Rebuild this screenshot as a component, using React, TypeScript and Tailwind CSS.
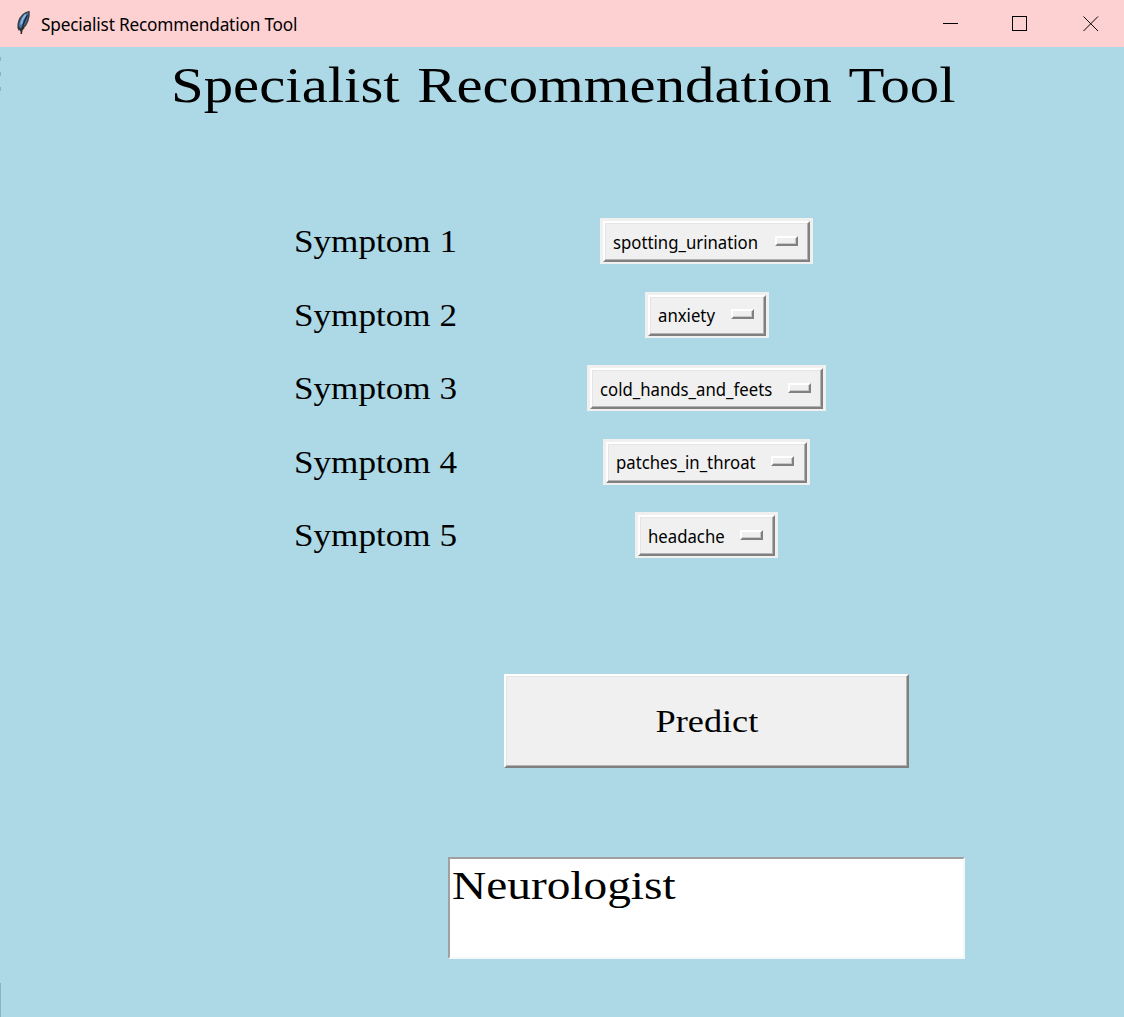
import React from "react";

const symptoms = [
  { label: "Symptom 1", value: "spotting_urination", box: "w-[213px]", text: "w-[146px]" },
  { label: "Symptom 2", value: "anxiety", box: "w-[124px]", text: "w-[57px]" },
  { label: "Symptom 3", value: "cold_hands_and_feets", box: "w-[239px]", text: "w-[172px]" },
  { label: "Symptom 4", value: "patches_in_throat", box: "w-[207px]", text: "w-[139px]" },
  { label: "Symptom 5", value: "headache", box: "w-[143px]", text: "w-[76px]" },
];

function Feather() {
  return (
    <svg width="16" height="26" viewBox="0 0 16 26" className="shrink-0">
      <path d="M14 1.8 C10 2 5.2 6.5 3.8 11.5 C2.9 15 2.7 17 3.8 19.5 L8 18 C11.5 15 14.8 8 14 1.8 Z" fill="#3f74ad" stroke="#3c4046" strokeWidth="1.5" />
      <path d="M11 4.5 C8.5 7 6.6 11 6.2 14.5" stroke="#87b5e2" strokeWidth="2" fill="none" />
      <path d="M12.5 5 C10 10 7 15 6.2 24" stroke="#25282c" strokeWidth="1.5" fill="none" />
      <path d="M3.2 17 L5.8 20.5 L9 17.5" stroke="#303236" strokeWidth="1.8" fill="none" />
    </svg>
  );
}

function TitleBar() {
  return (
    <header className="flex h-[47px] items-center bg-[#fdd1d2] pl-[15px]">
      <div className="-mt-[2px]"><Feather /></div>
      <h1 className="ml-[10px] grow whitespace-nowrap font-['Noto_Sans'] text-[18px] leading-6 tracking-[-0.2px] text-black">
        <span className="inline-block origin-left scale-x-[0.958]">Specialist Recommendation Tool</span>
      </h1>
      <div className="flex items-center gap-[54px] pr-[25px]">
        <svg width="15" height="16" viewBox="0 0 15 16" shapeRendering="crispEdges">
          <path d="M0 7.5H15" stroke="#000" />
        </svg>
        <svg width="16" height="16" viewBox="0 0 16 16" shapeRendering="crispEdges">
          <rect x="0.5" y="0.5" width="14" height="14" stroke="#000" fill="none" />
        </svg>
        <svg width="16" height="16" viewBox="0 0 16 16" className="ml-[1px]">
          <path d="M0.5 0.5L15 15M15 0.5L0.5 15" stroke="#000" strokeWidth="1" />
        </svg>
      </div>
    </header>
  );
}

function Dropdown({ value, box, text }: { value: string; box: string; text: string }) {
  return (
    <div className={`h-[46px] bg-[#f0f0f0] p-[3px] ${box}`}>
      <button className="flex h-[41px] w-full items-center border-2 border-t-white border-r-[#808080] border-b-[#808080] border-l-white bg-[#f0f0f0] pl-[8px] shadow-[inset_-1px_-1px_#b4b4b4,inset_1px_1px_#e5e5e5]">
        <span className={`whitespace-nowrap text-left font-['Noto_Sans'] text-[18px] leading-6 text-black ${text}`}>
          <span className="inline-block origin-left scale-x-[0.93]">{value}</span>
        </span>
        <span className="-mt-[2px] ml-[16px] h-[10px] w-[23px] shrink-0 border-2 border-t-white border-r-[#808080] border-b-[#808080] border-l-white bg-[#efefef] shadow-[inset_-1px_-1px_#c8c8c8]" />
      </button>
    </div>
  );
}

export default function App() {
  return (
    <div className="flex h-[1017px] w-[1124px] flex-col overflow-hidden bg-[#add8e6] font-['Liberation_Serif'] text-black">
      <TitleBar />
      <main className="relative flex grow flex-col">
        <div className="absolute top-[10px] left-0 flex flex-col gap-[11px]">
          <i className="h-[4px] w-px bg-[#8fb0bd]" />
          <i className="h-[4px] w-px bg-[#8fb0bd]" />
          <i className="h-[4px] w-px bg-[#8fb0bd]" />
        </div>
        <div className="absolute bottom-0 left-0 h-[34px] w-px bg-[#8fb0bd]" />
        <h2 className="ml-[171px] pt-[8px] text-[50px] leading-[60px] whitespace-nowrap">
          <span className="inline-block origin-left scale-x-[1.176] [word-spacing:2.5px]">Specialist Recommendation Tool</span>
        </h2>
        <section className="mt-[103px] flex flex-col gap-[27.5px]">
          {symptoms.map((s) => (
            <div key={s.label} className="flex h-[46px] items-center pl-[294px]">
              <div className="mt-[2px] w-[163px] text-[31px] leading-[40px] whitespace-nowrap">
                <span className="inline-block origin-left scale-x-[1.133]">{s.label}</span>
              </div>
              <div className="ml-[100px] flex w-[299px] justify-center">
                <Dropdown value={s.value} box={s.box} text={s.text} />
              </div>
            </div>
          ))}
        </section>
        <button className="mt-[116px] ml-[504px] flex h-[94px] w-[405px] shrink-0 items-center justify-center border-2 border-t-white border-r-[#808080] border-b-[#808080] border-l-white bg-[#f0f0f0] pt-[2px] text-[31px] shadow-[inset_-1px_-1px_#b4b4b4,inset_1px_1px_#e5e5e5]">
          <span className="inline-block scale-x-[1.17]">Predict</span>
        </button>
        <div className="mt-[89px] ml-[448px] h-[102px] w-[517px] shrink-0 border-2 border-t-[#a0a0a0] border-r-[#f4f8fa] border-b-[#f4f8fa] border-l-[#a0a0a0] bg-white pl-[2px] text-[41px] leading-[52px]">
          <span className="inline-block origin-left scale-x-[1.155]">Neurologist</span>
        </div>
      </main>
    </div>
  );
}
